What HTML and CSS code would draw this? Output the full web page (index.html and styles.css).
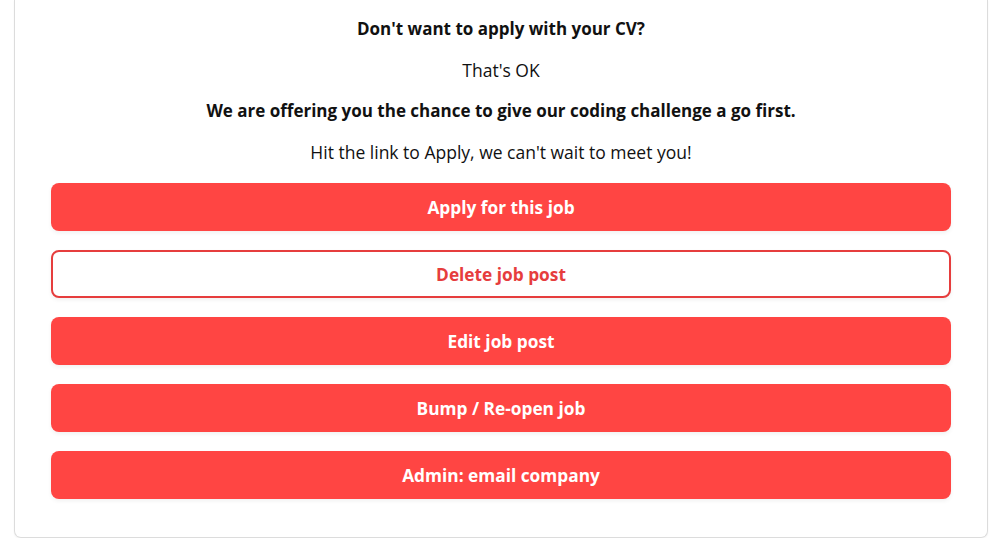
FILE: index.html
```html
<!DOCTYPE html>
<html lang="en">
<head>
<meta charset="utf-8">
<title>Apply</title>
<link rel="stylesheet" href="styles.css">
</head>
<body>
<div class="page">
  <section class="card">
    <div class="intro">
      <p class="bold">Don't want to apply with your CV?</p>
      <p>That's OK</p>
      <p class="bold">We are offering you the chance to give our coding challenge a go first.</p>
      <p>Hit the link to Apply, we can't wait to meet you!</p>
    </div>
    <div class="actions">
      <a class="btn btn-solid" href="#">Apply for this job</a>
      <a class="btn btn-outline" href="#">Delete job post</a>
      <a class="btn btn-solid" href="#">Edit job post</a>
      <a class="btn btn-solid" href="#">Bump / Re-open job</a>
      <a class="btn btn-solid" href="#">Admin: email company</a>
    </div>
  </section>
</div>
</body>
</html>
```

FILE: styles.css
```css
html, body {
  margin: 0;
  padding: 0;
  background: #ffffff;
}
body {
  font-family: "Open Sans", "Lato", sans-serif;
  color: #111111;
}
.page {
  padding: 0 12px 0 14px;
}
.card {
  border: 1px solid #dcdcdc;
  border-top: 0;
  border-radius: 0 0 7px 7px;
  padding: 17px 36px 38px 36px;
  box-shadow: 0 1px 2px rgba(0,0,0,0.05);
}
.intro {
  display: flex;
  flex-direction: column;
  gap: 17px;
  text-align: center;
}
.intro p {
  margin: 0;
  font-size: 17.5px;
  line-height: 24px;
}
.intro .bold {
  font-size: 17px;
  font-weight: 700;
}
.actions {
  margin-top: 19px;
  display: flex;
  flex-direction: column;
  gap: 19px;
}
.btn {
  display: flex;
  align-items: center;
  justify-content: center;
  height: 48px;
  box-sizing: border-box;
  border-radius: 8px;
  font-size: 17.3px;
  font-weight: 700;
  text-decoration: none;
  box-shadow: 0 2px 4px rgba(0,0,0,0.06);
}
.btn-solid {
  background: #ff4543;
  color: #ffffff;
}
.btn-outline {
  background: #ffffff;
  color: #e63d3d;
  border: 2px solid #e63d3d;
}
```
